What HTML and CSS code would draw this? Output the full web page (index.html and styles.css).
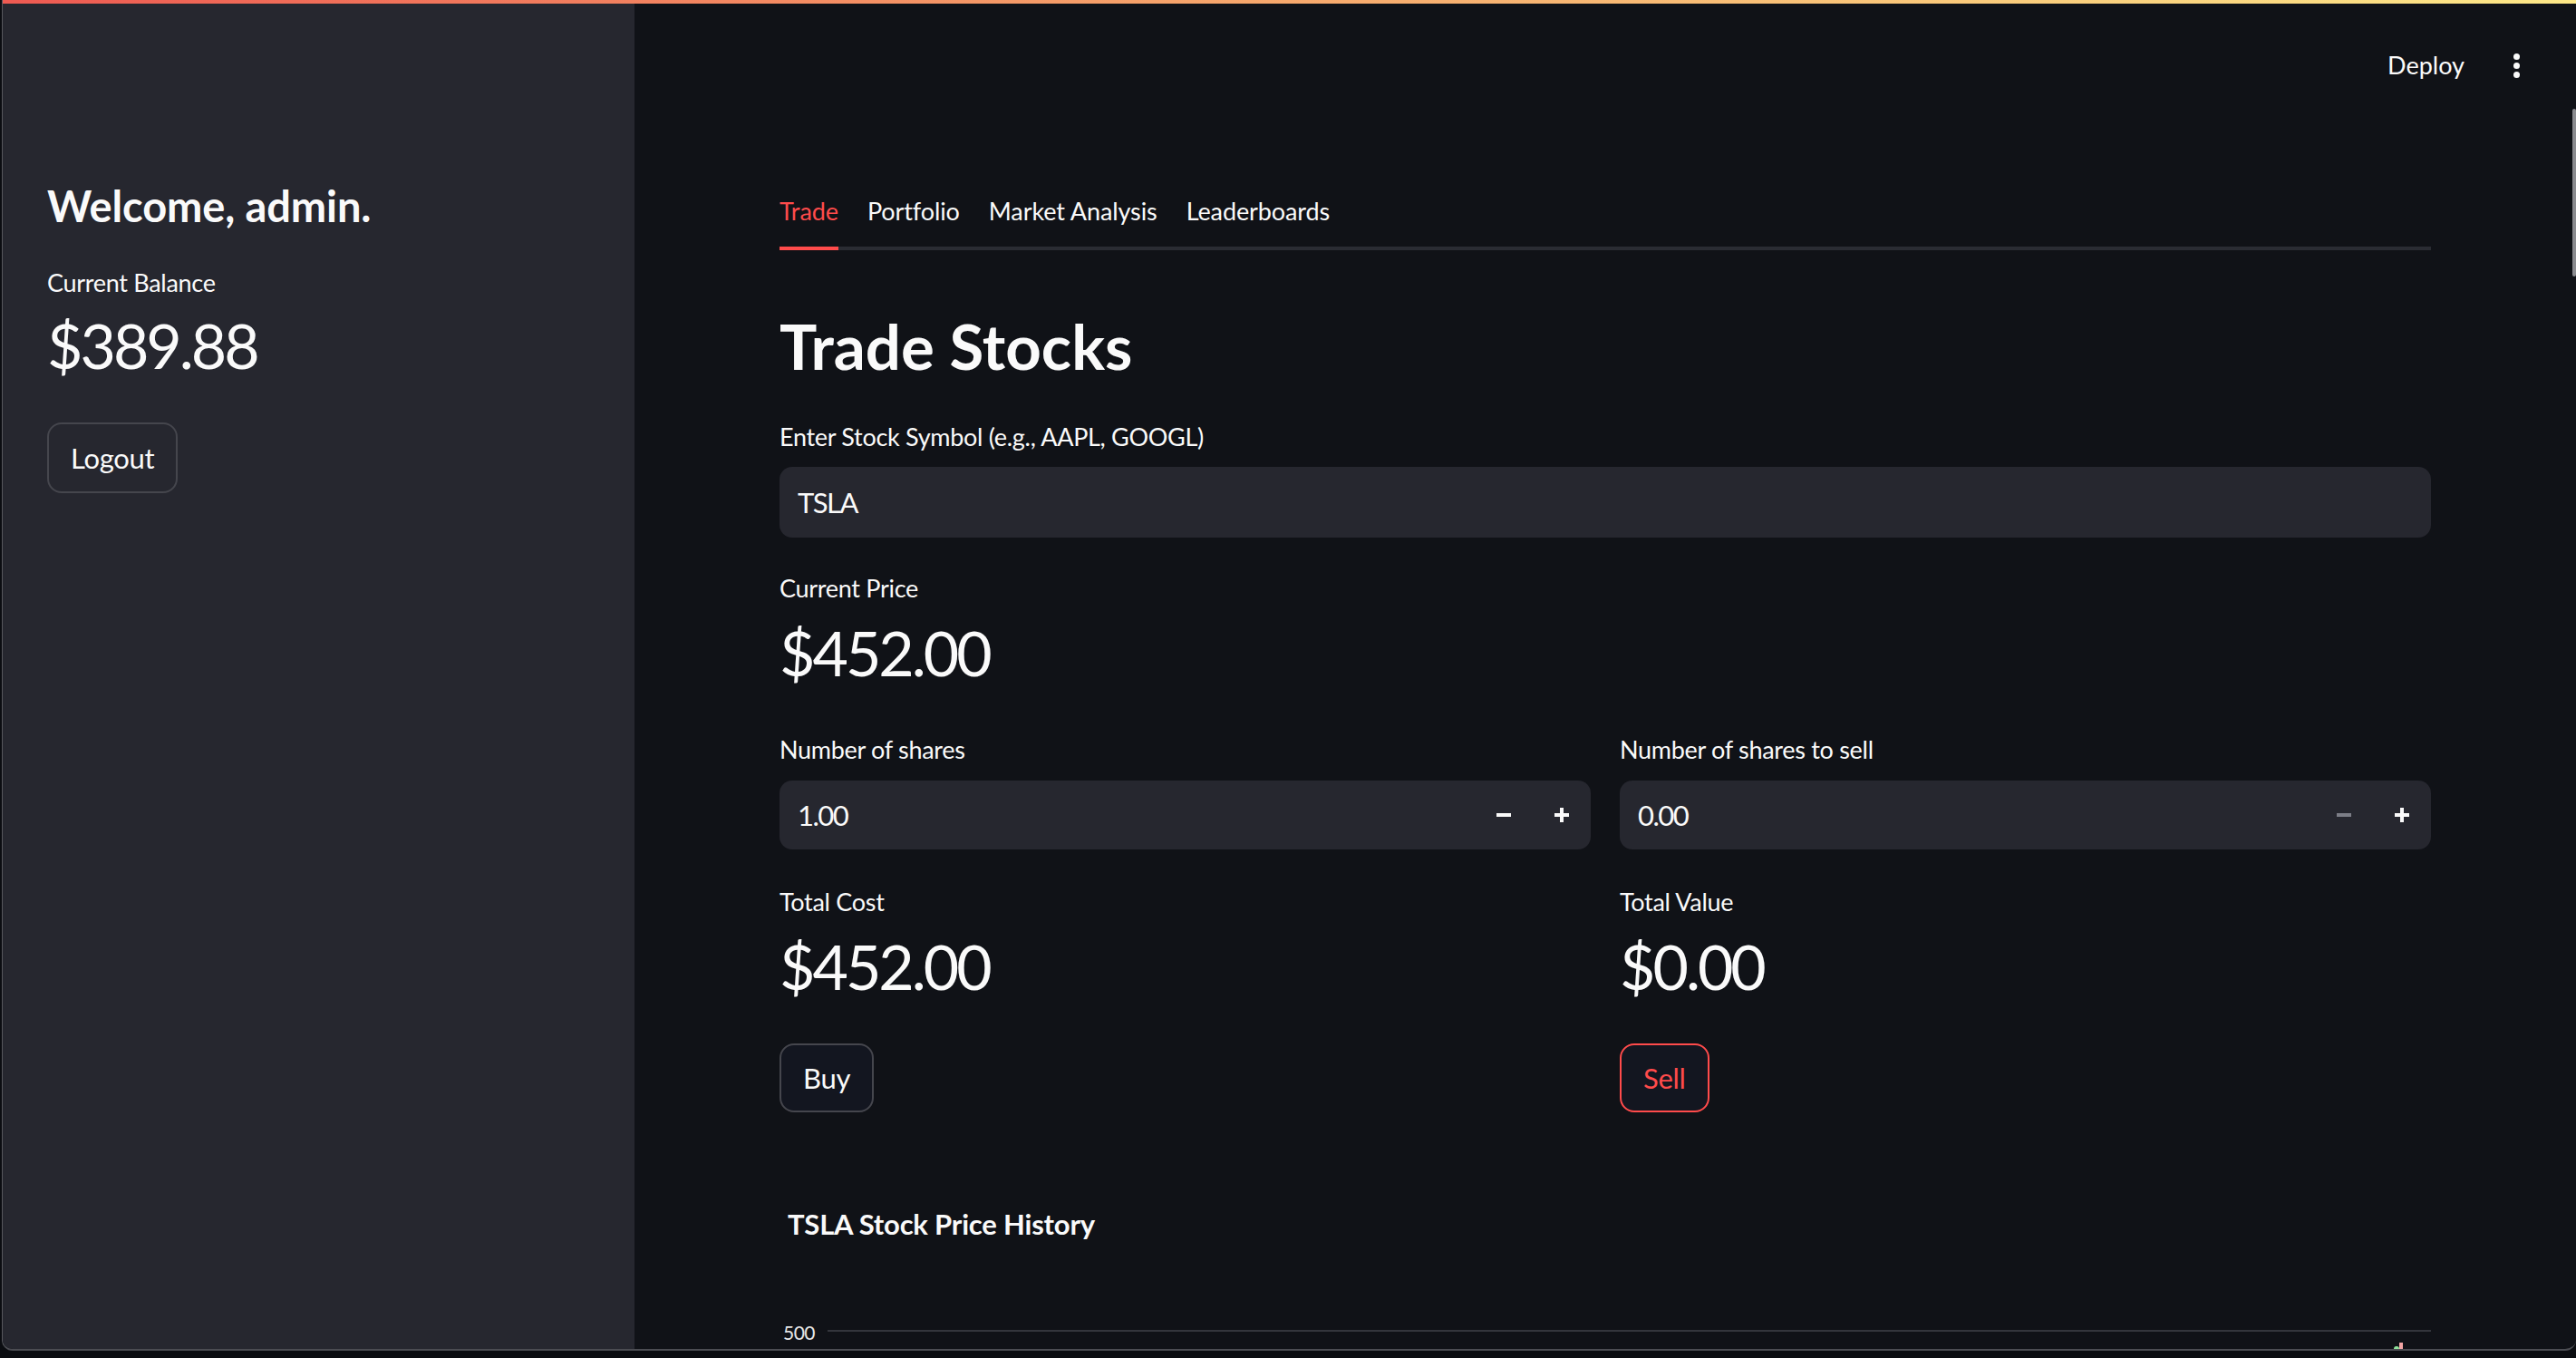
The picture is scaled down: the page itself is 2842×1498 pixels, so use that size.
FILE: index.html
```html
<!DOCTYPE html>
<html lang="en">
<head>
<meta charset="utf-8">
<title>Trade Stocks</title>
<link rel="stylesheet" href="styles.css">
</head>
<body>
<div class="window">
  <div class="decoration"></div>
  <div class="app">
    <aside class="sidebar">
      <h3 class="welcome">Welcome, admin.</h3>
      <div class="metric side-metric">
        <div class="field-label">Current Balance</div>
        <div class="metric-value">$389.88</div>
      </div>
      <button class="btn side-btn">Logout</button>
    </aside>
    <main class="main">
      <header class="topbar">
        <span class="deploy">Deploy</span>
        <span class="kebab"><i></i><i></i><i></i></span>
      </header>
      <div class="content">
        <nav class="tabs">
          <span class="tab active">Trade</span>
          <span class="tab">Portfolio</span>
          <span class="tab">Market Analysis</span>
          <span class="tab">Leaderboards</span>
        </nav>
        <h2 class="title">Trade Stocks</h2>
        <div class="field-label symbol-label">Enter Stock Symbol (e.g., AAPL, GOOGL)</div>
        <div class="text-input">TSLA</div>
        <div class="metric price-metric">
          <div class="field-label">Current Price</div>
          <div class="metric-value">$452.00</div>
        </div>
        <div class="cols">
          <div class="col">
            <div class="field-label">Number of shares</div>
            <div class="num-input">
              <span class="num-val">1.00</span>
              <span class="step"><i class="minus"></i></span>
              <span class="step"><i class="plus"></i></span>
            </div>
            <div class="metric col-metric">
              <div class="field-label">Total Cost</div>
              <div class="metric-value">$452.00</div>
            </div>
            <button class="btn act-btn">Buy</button>
          </div>
          <div class="col">
            <div class="field-label">Number of shares to sell</div>
            <div class="num-input">
              <span class="num-val">0.00</span>
              <span class="step disabled"><i class="minus"></i></span>
              <span class="step"><i class="plus"></i></span>
            </div>
            <div class="metric col-metric">
              <div class="field-label">Total Value</div>
              <div class="metric-value">$0.00</div>
            </div>
            <button class="btn act-btn sell">Sell</button>
          </div>
        </div>
        <section class="chart">
          <div class="chart-title">TSLA Stock Price History</div>
          <div class="plot">
            <span class="axis-label">500</span>
            <span class="gridline"></span>
            <span class="candle up"></span>
            <span class="candle down"></span>
          </div>
        </section>
      </div>
      <div class="scrollbar"></div>
    </main>
  </div>
</div>
</body>
</html>
```

FILE: styles.css
```css
* { box-sizing: border-box; }

html, body {
  margin: 0;
  height: 100%;
}

body {
  background: #0b0d11;
  color: #fafafa;
  font-family: Lato, "Source Sans Pro", "Noto Sans", sans-serif;
  overflow: hidden;
}

.window {
  margin-left: 2px;
  width: 2840px;
  height: 1490px;
  border-left: 1px solid #56575d;
  border-bottom: 2px solid #4b4c52;
  border-radius: 0 0 12px 12px;
  overflow: hidden;
  display: flex;
  flex-direction: column;
  background: #101217;
}

.decoration {
  flex: none;
  height: 4px;
  background: linear-gradient(90deg, #ee5a52, #f6a26a 45%, #fde888);
}

.app {
  flex: 1;
  display: flex;
  min-height: 0;
}

/* Sidebar */
.sidebar {
  flex: none;
  width: 697px;
  background: #26272f;
  padding: 193px 0 0 49px;
}

.welcome {
  margin: 0;
  font-size: 47px;
  line-height: 60px;
  font-weight: 700;
  letter-spacing: -0.1px;
}

.side-metric { margin-top: 35px; }

.field-label {
  font-size: 27px;
  line-height: 40px;
  letter-spacing: -0.3px;
}

.metric-value {
  margin-top: 6px;
  font-size: 68px;
  line-height: 86px;
  font-weight: 400;
  letter-spacing: -3px;
}

.btn {
  display: block;
  height: 78px;
  padding: 0 24px;
  font-family: inherit;
  font-size: 31px;
  letter-spacing: -0.3px;
  color: #fafafa;
  background: transparent;
  border: 2px solid #45464d;
  border-radius: 16px;
}

.side-btn { margin-top: 42px; }

/* Main */
.main {
  flex: 1;
  min-width: 0;
  position: relative;
  display: flex;
  flex-direction: column;
}

.topbar {
  flex: none;
  height: 136px;
  display: flex;
  justify-content: flex-end;
  align-items: center;
  gap: 54px;
  padding-right: 62px;
}

.deploy {
  font-size: 27px;
  line-height: 40px;
}

.kebab {
  display: flex;
  flex-direction: column;
  gap: 3px;
}

.kebab i {
  display: block;
  width: 7px;
  height: 7px;
  border-radius: 50%;
  background: #fafafa;
}

.content {
  padding: 52px 160px 0 160px;
}

.tabs {
  display: flex;
  gap: 32px;
  box-shadow: inset 0 -4px 0 #2a2c33;
}

.tab {
  height: 84px;
  padding-bottom: 4px;
  display: flex;
  align-items: center;
  font-size: 27px;
  letter-spacing: -0.1px;
}

.tab.active {
  color: #ff4b4b;
  box-shadow: inset 0 -4px 0 #ff4b4b;
}

.title {
  margin: 63px 0 0;
  font-size: 69px;
  line-height: 86px;
  font-weight: 700;
}

.symbol-label { margin-top: 37px; }

.text-input {
  margin-top: 13px;
  height: 78px;
  display: flex;
  align-items: center;
  padding-left: 20px;
  font-size: 31px;
  letter-spacing: -1.5px;
  background: #26272f;
  border-radius: 14px;
}

.price-metric { margin-top: 36px; }
.price-metric .metric-value { margin-top: 8px; }

.cols {
  margin-top: 44px;
  display: grid;
  grid-template-columns: 1fr 1fr;
  column-gap: 32px;
}

.num-input {
  margin-top: 14px;
  height: 76px;
  display: flex;
  align-items: stretch;
  background: #26272f;
  border-radius: 14px;
}

.num-val {
  flex: 1;
  display: flex;
  align-items: center;
  padding-left: 20px;
  font-size: 31px;
  letter-spacing: -1.5px;
}

.step {
  width: 64px;
  display: flex;
  align-items: center;
  justify-content: center;
}

.minus, .plus {
  display: block;
  position: relative;
  width: 16px;
  height: 16px;
}

.minus::before, .plus::before, .plus::after {
  content: "";
  position: absolute;
  background: #fafafa;
}

.minus::before, .plus::before {
  left: 0;
  top: 6px;
  width: 16px;
  height: 4px;
}

.plus::after {
  left: 6px;
  top: 0;
  width: 4px;
  height: 16px;
}

.step.disabled .minus::before { background: #7c7e87; }

.col-metric { margin-top: 38px; }
.col-metric .metric-value { margin-top: 8px; }

.act-btn {
  margin-top: 42px;
  height: 76px;
  background: #131620;
}

.act-btn.sell {
  color: #ff4b4b;
  border-color: #ff4b4b;
}

/* Chart */
.chart { margin-top: 103px; }

.chart-title {
  padding-left: 9px;
  font-size: 31px;
  line-height: 40px;
  font-weight: 700;
  letter-spacing: -0.2px;
}

.plot {
  position: relative;
  margin-top: 85px;
  display: flex;
  align-items: center;
  height: 30px;
}

.axis-label {
  width: 53px;
  padding-left: 4px;
  font-size: 21px;
  line-height: 30px;
  letter-spacing: -0.5px;
  color: #e6e6e6;
}

.gridline {
  flex: 1;
  height: 2px;
  margin-top: -4px;
  background: #33353c;
}

.candle {
  position: absolute;
  width: 6px;
}

.candle.up {
  left: 1781px;
  top: 30px;
  height: 10px;
  background: #8fe39b;
  border-radius: 3px 3px 0 0;
}

.candle.down {
  left: 1787px;
  top: 26px;
  width: 4px;
  height: 14px;
  background: #f2a4a4;
}

.scrollbar {
  position: absolute;
  right: 0;
  top: 116px;
  width: 4px;
  height: 185px;
  background: #8a8b8f;
  border-radius: 2px;
}
```
